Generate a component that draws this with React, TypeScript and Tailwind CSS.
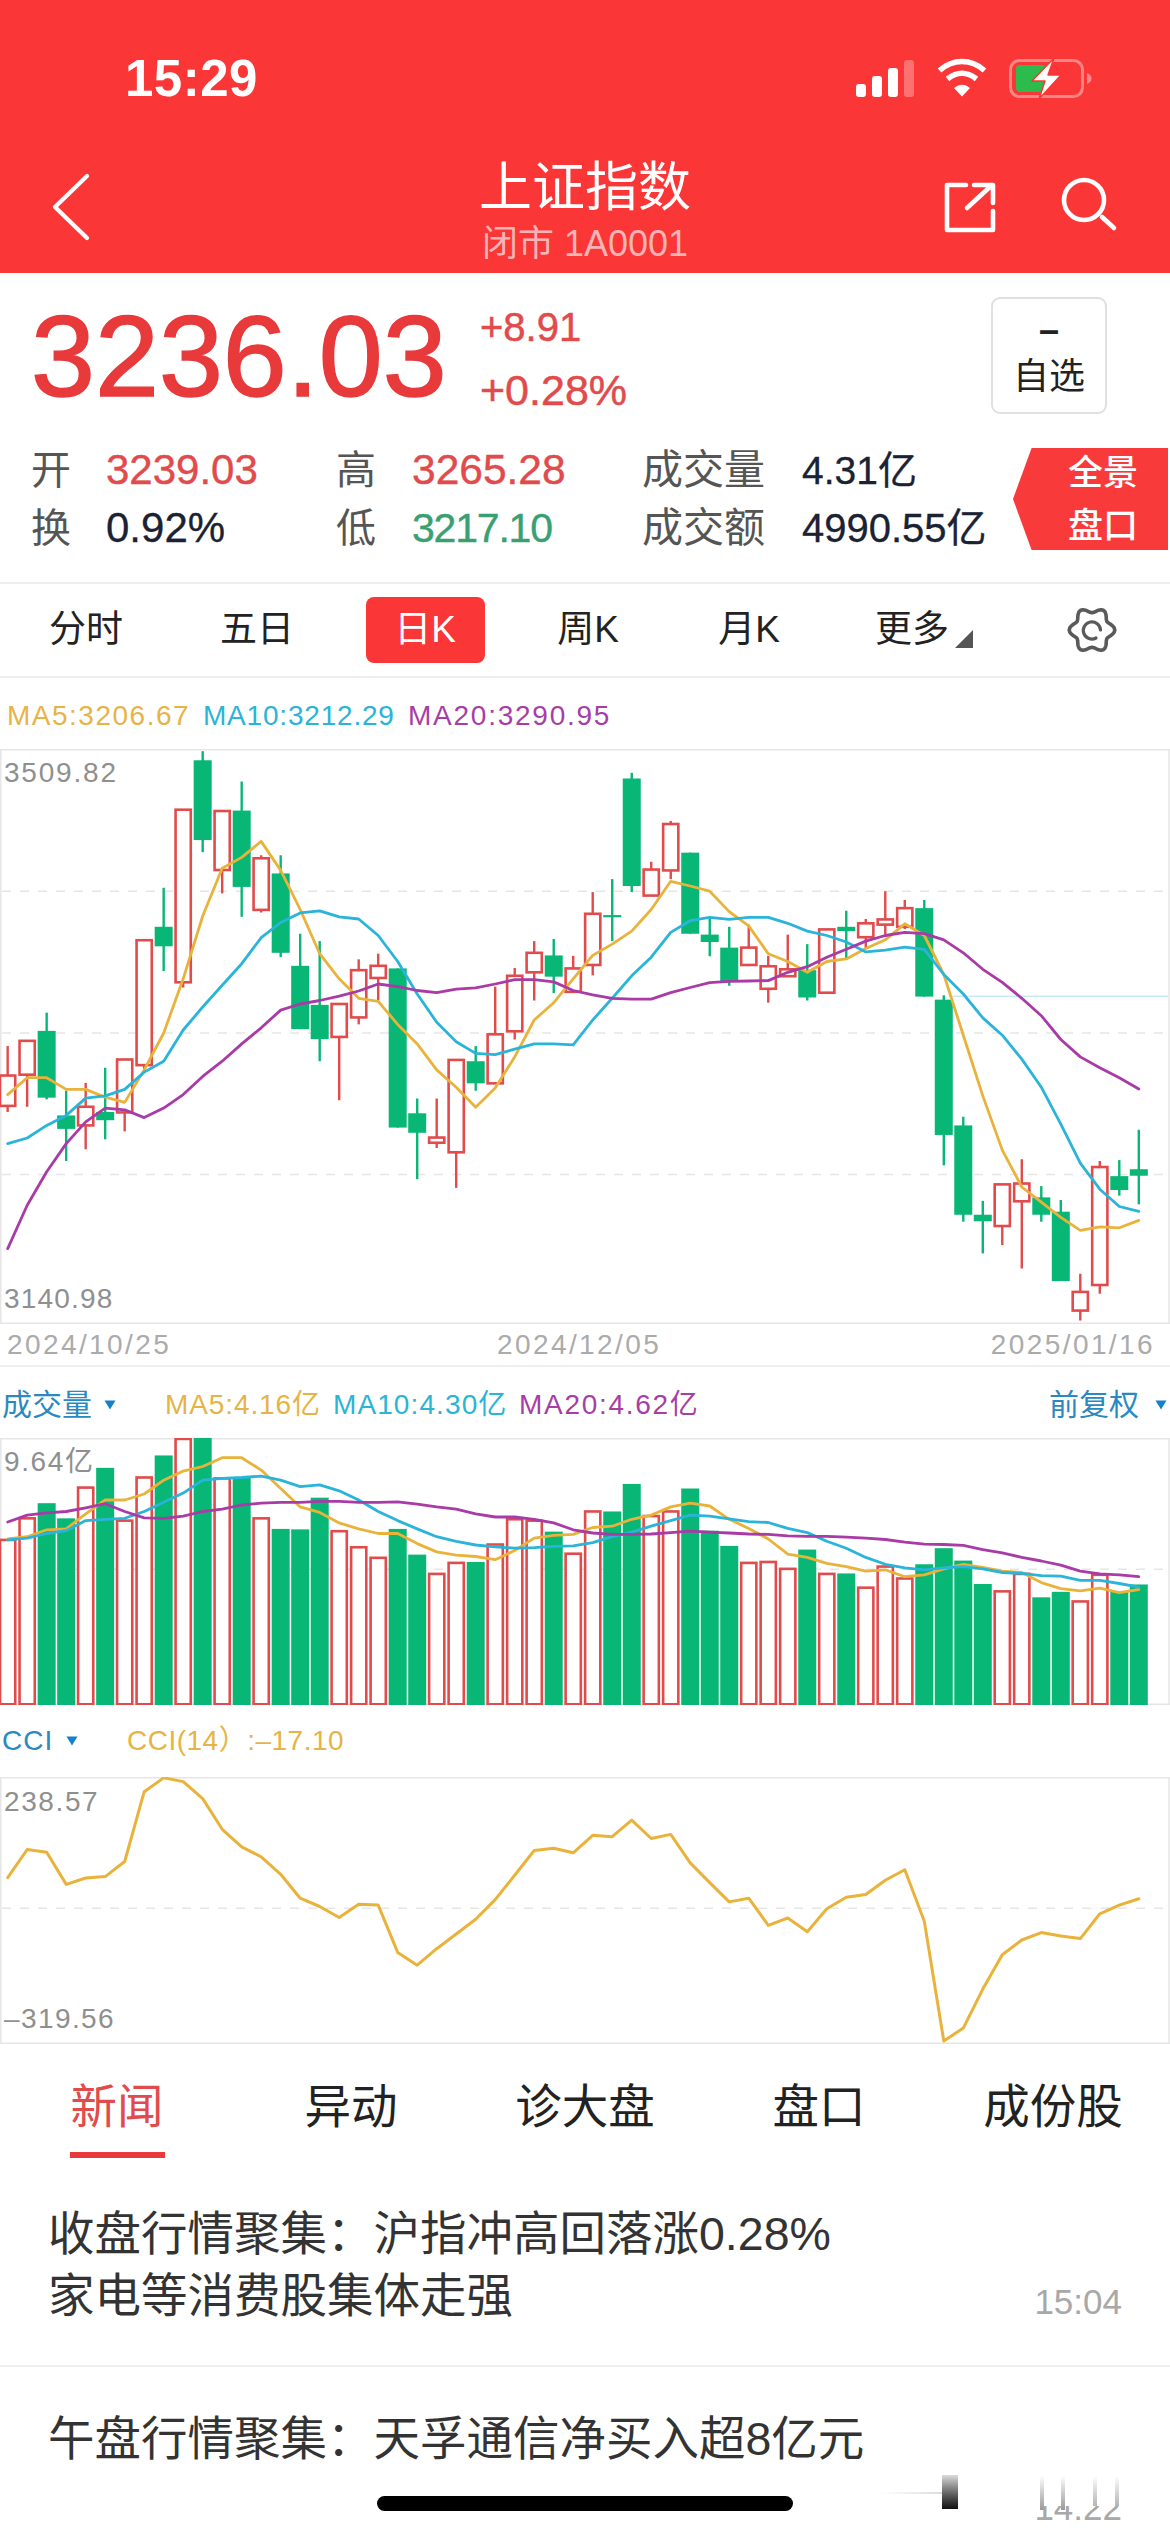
import React from "react";

const SX = 2.613;
const xAt = (i: number) => (20 + 50.96 * i) / SX;
const GREEN = "#08b675";
const RED = "#e14b4c";
const GOLD = "#e9b33b";
const BLUE = "#2ab4da";
const PURPLE = "#a93aa6";

type C = [number, number, number, number, "r" | "g"];
const candles: C[] = [
  [913,983,845,997,"r"],[833,911,833,985,"r"],[810,964,768,968,"g"],[1005,1036,948,1110,"g"],[985,1028,930,1083,"r"],
  [997,1016,895,1060,"g"],[876,998,876,1042,"r"],[601,889,601,905,"r"],[570,615,480,672,"g"],[300,698,300,710,"r"],
  [186,370,165,398,"g"],[303,439,303,493,"r"],[302,478,235,547,"g"],[412,531,405,537,"r"],[447,630,405,640,"g"],
  [660,806,586,806,"g"],[750,829,603,880,"g"],[748,824,748,970,"r"],[670,779,645,795,"r"],[660,688,632,740,"r"],
  [666,1033,666,1033,"g"],[1000,1045,966,1152,"g"],[1056,1068,966,1080,"r"],[877,1090,877,1172,"r"],[880,931,845,948,"g"],
  [818,931,708,931,"r"],[683,811,665,830,"r"],[630,675,603,740,"r"],[636,685,598,723,"g"],[666,720,637,720,"r"],
  [540,658,490,682,"r"],[543,548,460,603,"g"],[228,476,215,490,"g"],[438,498,420,498,"r"],[333,440,326,460,"r"],
  [399,586,399,586,"g"],[588,605,548,638,"g"],[618,696,570,706,"g"],[618,658,565,658,"r"],[661,713,637,745,"r"],
  [668,684,588,684,"r"],[670,733,610,740,"g"],[576,722,576,722,"r"],[570,580,533,645,"g"],[562,594,552,620,"r"],
  [553,565,488,590,"r"],[527,570,508,575,"r"],[527,731,508,731,"g"],[738,1050,728,1120,"g"],[1028,1234,1008,1250,"g"],
  [1234,1249,1202,1323,"g"],[1164,1260,1164,1304,"r"],[1162,1203,1106,1358,"r"],[1194,1234,1168,1250,"g"],[1227,1387,1200,1387,"g"],
  [1412,1455,1370,1478,"r"],[1124,1396,1110,1416,"r"],[1145,1177,1108,1190,"g"],[1129,1144,1038,1210,"g"],
];
const ma5 = [957,918,918,945,945,963,975,900,815,690,545,435,410,373,440,530,632,690,735,742,795,840,900,940,986,942,870,785,745,690,636,610,580,530,465,476,488,535,568,632,650,675,650,644,620,600,563,590,680,820,960,1085,1170,1205,1240,1270,1262,1264,1247];
const ma10 = [1070,1057,1028,1005,965,960,945,905,880,808,755,705,655,595,560,538,533,547,552,590,650,725,790,835,862,865,852,840,840,842,785,735,683,640,583,556,548,553,548,548,562,580,590,605,628,624,617,622,680,725,780,820,875,940,1025,1115,1175,1215,1226];
const ma20 = [1312,1212,1135,1070,1020,988,992,1010,988,957,915,880,840,803,762,748,740,730,718,702,708,717,722,714,711,702,692,692,697,717,727,735,737,737,722,710,699,696,695,694,675,662,640,622,603,590,583,586,600,630,668,698,735,775,830,870,895,918,944];
const volTops: [number, "r" | "g"][] = [
  [392,"r"],[345,"r"],[312,"g"],[345,"g"],[278,"r"],[235,"g"],[350,"r"],[256,"r"],[208,"g"],[172,"r"],[170,"g"],[258,"r"],[255,"g"],[345,"r"],[368,"g"],[369,"g"],[300,"g"],[373,"r"],[408,"r"],[431,"r"],[368,"g"],[424,"g"],[466,"r"],[442,"r"],[440,"g"],[402,"r"],[347,"r"],[350,"r"],[374,"g"],[422,"r"],[330,"r"],
  [330,"g"],[270,"g"],[340,"r"],[330,"r"],[280,"g"],[372,"g"],[405,"g"],[442,"r"],[440,"r"],[455,"r"],[413,"g"],[466,"r"],[465,"g"],[496,"r"],[450,"r"],[476,"r"],[445,"g"],[410,"g"],[437,"g"],[488,"g"],[504,"r"],[466,"r"],[517,"g"],[505,"g"],[526,"r"],[468,"r"],[505,"g"],[489,"g"],
];
const vGold = [390,385,370,368,335,305,305,292,262,242,232,213,213,240,280,320,332,355,368,378,378,400,418,425,428,435,415,388,382,380,365,362,347,338,320,312,318,347,367,390,423,430,443,450,460,457,472,468,455,445,452,460,463,485,498,503,497,507,500];
const vBlue = [392,388,378,372,350,347,345,330,310,290,262,258,256,253,262,276,272,285,305,330,350,368,385,395,403,407,410,409,406,405,398,385,375,362,350,338,340,346,352,354,367,376,395,410,430,445,453,457,453,450,455,463,465,470,471,480,480,487,495];
const vPurple = [353,338,333,330,322,313,330,344,345,340,330,325,316,312,310,310,308,308,310,310,309,314,320,325,335,342,342,347,355,370,377,380,380,379,376,373,375,377,379,380,383,384,384,386,388,391,397,401,402,404,413,420,430,438,447,460,466,468,472];
const cci = [1127,1066,1072,1142,1128,1125,1092,940,910,918,955,1022,1060,1082,1120,1172,1190,1214,1185,1187,1290,1318,1282,1250,1218,1175,1122,1068,1063,1073,1035,1038,1002,1042,1033,1095,1138,1180,1172,1231,1215,1245,1195,1170,1164,1133,1110,1222,1483,1455,1370,1295,1263,1247,1254,1260,1206,1187,1173];

function Line({ ys, y, color, w = 2.8 }: { ys: number[]; y: (v: number) => number; color: string; w?: number }) {
  return (
    <polyline
      fill="none"
      stroke={color}
      strokeWidth={w}
      strokeLinejoin="round"
      strokeLinecap="round"
      points={ys.map((v, i) => `${xAt(i).toFixed(1)},${y(v).toFixed(1)}`).join(" ")}
    />
  );
}

function Frame({ h }: { h: number }) {
  return (
    <>
      <line x1="0" x2="1170" y1="0.75" y2="0.75" stroke="#e6e6e6" strokeWidth="1.5" />
      <line x1="0" x2="1170" y1={h - 0.75} y2={h - 0.75} stroke="#e6e6e6" strokeWidth="1.5" />
      <line x1="0.75" x2="0.75" y1="0" y2={h} stroke="#e6e6e6" strokeWidth="1.5" />
      <line x1="1169" x2="1169" y1="0" y2={h} stroke="#e6e6e6" strokeWidth="1.5" />
    </>
  );
}

const Dash = ({ y }: { y: number }) => (
  <line x1="2" x2="1168" y1={y} y2={y} stroke="#e6e6e6" strokeWidth="1.5" strokeDasharray="9 9" />
);

function MainChart() {
  const y = (v: number) => (v - 160) / 2.306;
  return (
    <svg width="1170" height="575" viewBox="0 0 1170 575" className="block">
      <Frame h={575} />
      {[488, 815, 1141].map((v) => <Dash key={v} y={y(v)} />)}
      <line x1="949" x2="1168" y1={y(730)} y2={y(730)} stroke="#a9e2ea" strokeWidth="1" />
      {candles.map(([t, b, hi, lo, c], i) => {
        const x = xAt(i);
        const col = c === "r" ? RED : GREEN;
        return (
          <g key={i}>
            <line x1={x} x2={x} y1={y(hi)} y2={y(lo)} stroke={col} strokeWidth="2.4" />
            {c === "r" ? (
              <rect x={x - 7.6} y={y(t)} width="15.2" height={y(b) - y(t)} fill="#fff" stroke={col} strokeWidth="2.6" />
            ) : (
              <rect x={x - 9} y={y(t)} width="18" height={y(b) - y(t)} fill={col} />
            )}
          </g>
        );
      })}
      <Line ys={ma5} y={y} color={GOLD} />
      <Line ys={ma10} y={y} color={BLUE} />
      <Line ys={ma20} y={y} color={PURPLE} />
    </svg>
  );
}

function VolChart() {
  const y = (v: number) => (v - 170) / 2.178;
  const base = y(750);
  return (
    <svg width="1170" height="267" viewBox="0 0 1170 267" className="block">
      <Frame h={267} />
      <Dash y={y(456)} />
      {volTops.map(([t, c], i) => {
        const x = xAt(i);
        return c === "r" ? (
          <rect key={i} x={x - 7.6} y={y(t)} width="15.2" height={base - y(t)} fill="#fff" stroke={RED} strokeWidth="2.6" />
        ) : (
          <rect key={i} x={x - 9} y={y(t)} width="18" height={base - y(t) + 1} fill={GREEN} />
        );
      })}
      <Line ys={vGold} y={y} color={GOLD} />
      <Line ys={vBlue} y={y} color={BLUE} />
      <Line ys={vPurple} y={y} color={PURPLE} />
    </svg>
  );
}

function CciChart() {
  const y = (v: number) => (v - 908) / 2.178;
  return (
    <svg width="1170" height="267" viewBox="0 0 1170 267" className="block">
      <Frame h={267} />
      <Dash y={y(1194)} />
      <Line ys={cci} y={y} color={GOLD} w={3} />
    </svg>
  );
}

const Tri = ({ className }: { className: string }) => (
  <svg width="12" height="10" viewBox="0 0 12 10" className={className}>
    <path d="M0.5 0.5H11.5L6 9.5Z" fill="#1680c8" />
  </svg>
);

function StatusIcons() {
  return (
    <svg width="240" height="45" viewBox="855 55 240 45" className="block">
      <rect x="856" y="83" width="10" height="13" rx="3" fill="#fff" />
      <rect x="872" y="75" width="10" height="21" rx="3" fill="#fff" />
      <rect x="888" y="67" width="10" height="29" rx="3" fill="#fff" />
      <rect x="904" y="59" width="10" height="37" rx="3" fill="#fff" fillOpacity="0.3" />
      <g fill="none" stroke="#fff" strokeWidth="5.5">
        <path d="M939.5 69.5C953 57.5 971 57.5 984.5 69.5" />
        <path d="M947.5 78C957 70.5 967 70.5 976.5 78" />
      </g>
      <path d="M954 87C959 82.5 965 82.5 970 87L962 95.5Z" fill="#fff" />
      <rect x="1010.5" y="59.5" width="72" height="36" rx="9" fill="none" stroke="#fff" strokeOpacity="0.4" strokeWidth="3" />
      <rect x="1016" y="64" width="30" height="27" rx="4" fill="#2dbb4d" />
      <path d="M1087 72C1090 73 1091.5 75 1091.5 77.5C1091.5 80 1090 82 1087 83Z" fill="#fff" fillOpacity="0.4" />
      <path d="M1054 57L1032 80H1045L1039 98L1061 74H1048Z" fill="#fff" stroke="#fb3636" strokeWidth="1.5" strokeLinejoin="round" />
    </svg>
  );
}

function Gear() {
  const pts: string[] = [];
  for (let a = 0; a < 360; a += 6) {
    const t = (a * Math.PI) / 180;
    const r = 20 + 2.8 * Math.cos(6 * t);
    pts.push(`${(25 + r * Math.cos(t)).toFixed(2)},${(25 + r * Math.sin(t)).toFixed(2)}`);
  }
  return (
    <svg width="50" height="50" viewBox="0 0 50 50" className="block">
      <polygon points={pts.join(" ")} fill="none" stroke="#5a5a5a" strokeWidth="3.6" strokeLinejoin="round" />
      <path d="M33.5 25A8.6 8.6 0 1 0 29 33" fill="none" stroke="#5a5a5a" strokeWidth="3.2" strokeLinecap="round" />
    </svg>
  );
}

const periodTabs = [
  { t: "分时", w: "w-[172px]" },
  { t: "五日", w: "w-[170px]" },
];

export default function App() {
  return (
    <div className="relative h-[2532px] w-[1170px] overflow-hidden bg-white font-['Liberation_Sans','Noto_Sans_CJK_SC',sans-serif] text-[#222]">
      {/* Red header */}
      <header className="h-[273px] bg-[#fb3636] text-white">
        <div className="flex h-[156px] items-center justify-between pl-[125px] pr-[75px]">
          <span className="text-[51px] font-bold leading-none tracking-[0.5px]">15:29</span>
          <StatusIcons />
        </div>
        <div className="flex h-[117px] items-start">
          <div className="w-[260px] pl-[50px] pt-[16px]">
            <svg width="44" height="70" viewBox="0 0 44 70" className="block">
              <path d="M37 4L5 35L37 66" fill="none" stroke="#fff" strokeWidth="4.2" strokeLinecap="round" strokeLinejoin="round" />
            </svg>
          </div>
          <div className="flex flex-1 flex-col items-center">
            <div className="mt-[3px] h-[58px] text-[53px] leading-[58px]">上证指数</div>
            <div className="mt-[5px] text-[36px] leading-[44px] text-[#f8b4b4]">闭市 1A0001</div>
          </div>
          <div className="flex w-[260px] items-start pl-[33px] pt-[24px]">
            <svg width="54" height="54" viewBox="0 0 54 54" className="block">
              <g fill="none" stroke="#fff" strokeWidth="4.6" strokeLinecap="round" strokeLinejoin="round">
                <path d="M23 5H4V50H50V31" />
                <path d="M24 28L49 5M31 5H50V23" />
              </g>
            </svg>
            <svg width="60" height="60" viewBox="0 0 60 60" className="ml-[62px] -mt-[4px] block">
              <g fill="none" stroke="#fff" strokeWidth="4.6" strokeLinecap="round">
                <circle cx="25" cy="24" r="20" />
                <path d="M43 41L55 52" />
              </g>
            </svg>
          </div>
        </div>
      </header>

      {/* Quote */}
      <section className="border-b-2 border-[#eeeeee]">
        <div className="flex h-[141px] items-start pl-[31px] pt-[24px]">
          <div className="h-[117px] w-[449px] pt-[2px] text-[115px] leading-[115px] text-[#e8393b] [-webkit-text-stroke:1.6px_#e8393b]">3236.03</div>
          <div className="-mt-[1px] leading-[63px] text-[#e14b4c] [-webkit-text-stroke:0.5px_#e14b4c]">
            <div className="text-[40px]">+8.91</div>
            <div className="text-[43px]">+0.28%</div>
          </div>
          <div className="ml-auto mr-[63px] flex h-[117px] w-[116px] flex-col items-center rounded-[9px] border-2 border-[#e0e0e0]">
            <div className="mt-[12px] h-[38px] text-[36px] font-bold leading-[38px]">–</div>
            <div className="mt-[5px] text-[36px] leading-[46px] text-[#222]">自选</div>
          </div>
        </div>
        <div className="flex items-center pb-[25px] pt-[27px]">
          <div className="grid flex-1 grid-cols-[75px_230px_76px_230px_160px_1fr] grid-rows-[58px_58px] items-center pl-[31px] text-[41px] leading-none text-[#555]">
            <span className="text-[40px]">开</span>
            <span className="text-[42px] text-[#e14b4c] [-webkit-text-stroke:0.4px_#e14b4c]">3239.03</span>
            <span className="text-[40px]">高</span>
            <span className="text-[42.5px] text-[#e14b4c] [-webkit-text-stroke:0.4px_#e14b4c]">3265.28</span>
            <span>成交量</span>
            <span className="text-[39px] text-[#1a2233] [-webkit-text-stroke:0.3px_#1a2233]">4.31亿</span>
            <span className="text-[40px]">换</span>
            <span className="text-[42px] text-[#1a2233] [-webkit-text-stroke:0.3px_#1a2233]">0.92%</span>
            <span className="text-[40px]">低</span>
            <span className="text-[41px] tracking-[-1.2px] text-[#3a9f72] [-webkit-text-stroke:0.4px_#3a9f72]">3217.10</span>
            <span>成交额</span>
            <span className="whitespace-nowrap text-[40px] text-[#1a2233] [-webkit-text-stroke:0.3px_#1a2233]">4990.55亿</span>
          </div>
          <div className="mr-[2px] flex h-[102px] w-[155px] flex-col items-end justify-center bg-[#f93a3b] pr-[30px] text-[35px] font-medium leading-[53px] text-white [clip-path:polygon(12%_0,100%_0,100%_100%,12%_100%,0_50%)]">
            <div>全景</div>
            <div>盘口</div>
          </div>
        </div>
      </section>

      {/* Period tabs */}
      <nav className="flex h-[94px] items-center border-b-2 border-[#eeeeee] text-[37px] text-[#222]">
        {periodTabs.map((p) => (
          <div key={p.t} className={`${p.w} text-center`}>{p.t}</div>
        ))}
        <div className="flex w-[166px] justify-center">
          <div className="flex h-[66px] w-[119px] items-center justify-center rounded-[8px] bg-[#fb3636] text-white">日K</div>
        </div>
        <div className="w-[160px] text-center">周K</div>
        <div className="w-[162px] text-center">月K</div>
        <div className="relative w-[164px] text-center">
          更多
          <svg width="18" height="18" viewBox="0 0 18 18" className="absolute left-[125px] top-[28px]">
            <path d="M18 0V18H0Z" fill="#555" />
          </svg>
        </div>
        <div className="ml-[73px]"><Gear /></div>
      </nav>

      {/* MA labels */}
      <div className="flex h-[71px] items-center whitespace-nowrap pl-[7px] pt-[5px] text-[28px]">
        <span className="w-[196px] tracking-[1.5px] text-[#e6b445]">MA5:3206.67</span>
        <span className="w-[205px] tracking-[0.8px] text-[#2ab4d6]">MA10:3212.29</span>
        <span className="tracking-[1.75px] text-[#a63ea6]">MA20:3290.95</span>
      </div>

      {/* Main chart */}
      <div className="relative h-[575px]">
        <MainChart />
        <div className="absolute left-[4px] top-[10px] text-[28px] leading-[28px] tracking-[1.8px] text-[#8f8f8f]">3509.82</div>
        <div className="absolute left-[4px] top-[536px] text-[28px] leading-[28px] tracking-[1.2px] text-[#8f8f8f]">3140.98</div>
      </div>

      {/* Dates */}
      <div className="flex h-[43px] items-center border-b-2 border-[#eeeeee] pl-[7px] pr-[15px] text-[28px] tracking-[2.4px] text-[#ababab]">
        <span className="w-[490px]">2024/10/25</span>
        <span>2024/12/05</span>
        <span className="ml-auto">2025/01/16</span>
      </div>

      {/* Volume header */}
      <div className="flex h-[71px] items-center whitespace-nowrap pl-[2px] pt-[4px] text-[28px]">
        <span className="w-[102px] text-[30px] text-[#2a8ac0]">成交量</span>
        <Tri className="block" />
        <span className="ml-[49px] w-[168px] tracking-[0.9px] text-[#e6b445]">MA5:4.16亿</span>
        <span className="w-[186px] tracking-[1.1px] text-[#2ab4d6]">MA10:4.30亿</span>
        <span className="tracking-[1.7px] text-[#a63ea6]">MA20:4.62亿</span>
        <span className="ml-auto text-[30px] text-[#2a8ac0]">前复权</span>
        <Tri className="ml-[16px] mr-[3px] block" />
      </div>

      <div className="relative h-[267px]">
        <VolChart />
        <div className="absolute left-[4px] top-[10px] text-[28px] leading-[28px] tracking-[1.6px] text-[#8f8f8f]">9.64亿</div>
      </div>

      {/* CCI header */}
      <div className="flex h-[72px] items-center whitespace-nowrap pl-[2px] text-[28px]">
        <span className="w-[64px] tracking-[1px] text-[#2a8ac0]">CCI</span>
        <Tri className="block" />
        <span className="ml-[49px] tracking-[0.5px] text-[#e6b445]">CCI(14）:–17.10</span>
      </div>

      <div className="relative h-[267px]">
        <CciChart />
        <div className="absolute left-[4px] top-[11px] text-[28px] leading-[28px] tracking-[1.6px] text-[#8f8f8f]">238.57</div>
        <div className="absolute left-[4px] top-[228px] text-[28px] leading-[28px] tracking-[1.4px] text-[#8f8f8f]">–319.56</div>
      </div>

      {/* News tabs */}
      <div className="grid h-[114px] grid-cols-5 text-[46.5px] leading-[46px]">
        <div className="flex flex-col items-center pt-[40px] text-[#e14b4c]">
          <div>新闻</div>
          <div className="mt-[22px] h-[6px] w-[95px] bg-[#e83a3c]" />
        </div>
        <div className="pt-[40px] text-center">异动</div>
        <div className="pt-[40px] text-center">诊大盘</div>
        <div className="pt-[40px] text-center">盘口</div>
        <div className="pt-[40px] text-center">成份股</div>
      </div>

      {/* News list */}
      <div className="flex items-end justify-between border-b-2 border-[#eeeeee] pb-[38px] pl-[48px] pr-[48px] pt-[45px] text-[46.5px] leading-[62px] text-[#333]">
        <div>
          <div>收盘行情聚集：沪指冲高回落涨0.28%</div>
          <div>家电等消费股集体走强</div>
        </div>
        <span className="text-[35px] leading-[50px] text-[#a8a8a8]">15:04</span>
      </div>
      <div className="flex items-start justify-between pl-[48px] pr-[48px] pt-[41px] text-[46.5px] leading-[62px] text-[#333]">
        <div>午盘行情聚集：天孚通信净买入超8亿元</div>
        <span className="mt-[75px] text-[35px] leading-[50px] text-[#a8a8a8]">14:22</span>
      </div>

      {/* Blurred watermark smear over the last row */}
      <div className="absolute left-[880px] top-[2470px] h-[36px] w-[270px] bg-white" />
      <div className="absolute left-[880px] top-[2492px] h-[2px] w-[62px] bg-gradient-to-r from-white to-[#dddddd]" />
      <div className="absolute left-[942px] top-[2475px] h-[34px] w-[16px] bg-gradient-to-b from-[#dcdcdc] to-[#111111]" />
      <div className="absolute left-[1040px] top-[2476px] h-[34px] w-[4px] bg-gradient-to-b from-white to-[#999999]" />
      <div className="absolute left-[1061px] top-[2476px] h-[34px] w-[4px] bg-gradient-to-b from-white to-[#999999]" />
      <div className="absolute left-[1093px] top-[2476px] h-[30px] w-[4px] bg-gradient-to-b from-white to-[#b5b5b5]" />
      <div className="absolute left-[1115px] top-[2476px] h-[30px] w-[4px] bg-gradient-to-b from-white to-[#b5b5b5]" />

      {/* Home indicator */}
      <div className="absolute left-[377px] top-[2496px] h-[15px] w-[416px] rounded-full bg-black" />
    </div>
  );
}
